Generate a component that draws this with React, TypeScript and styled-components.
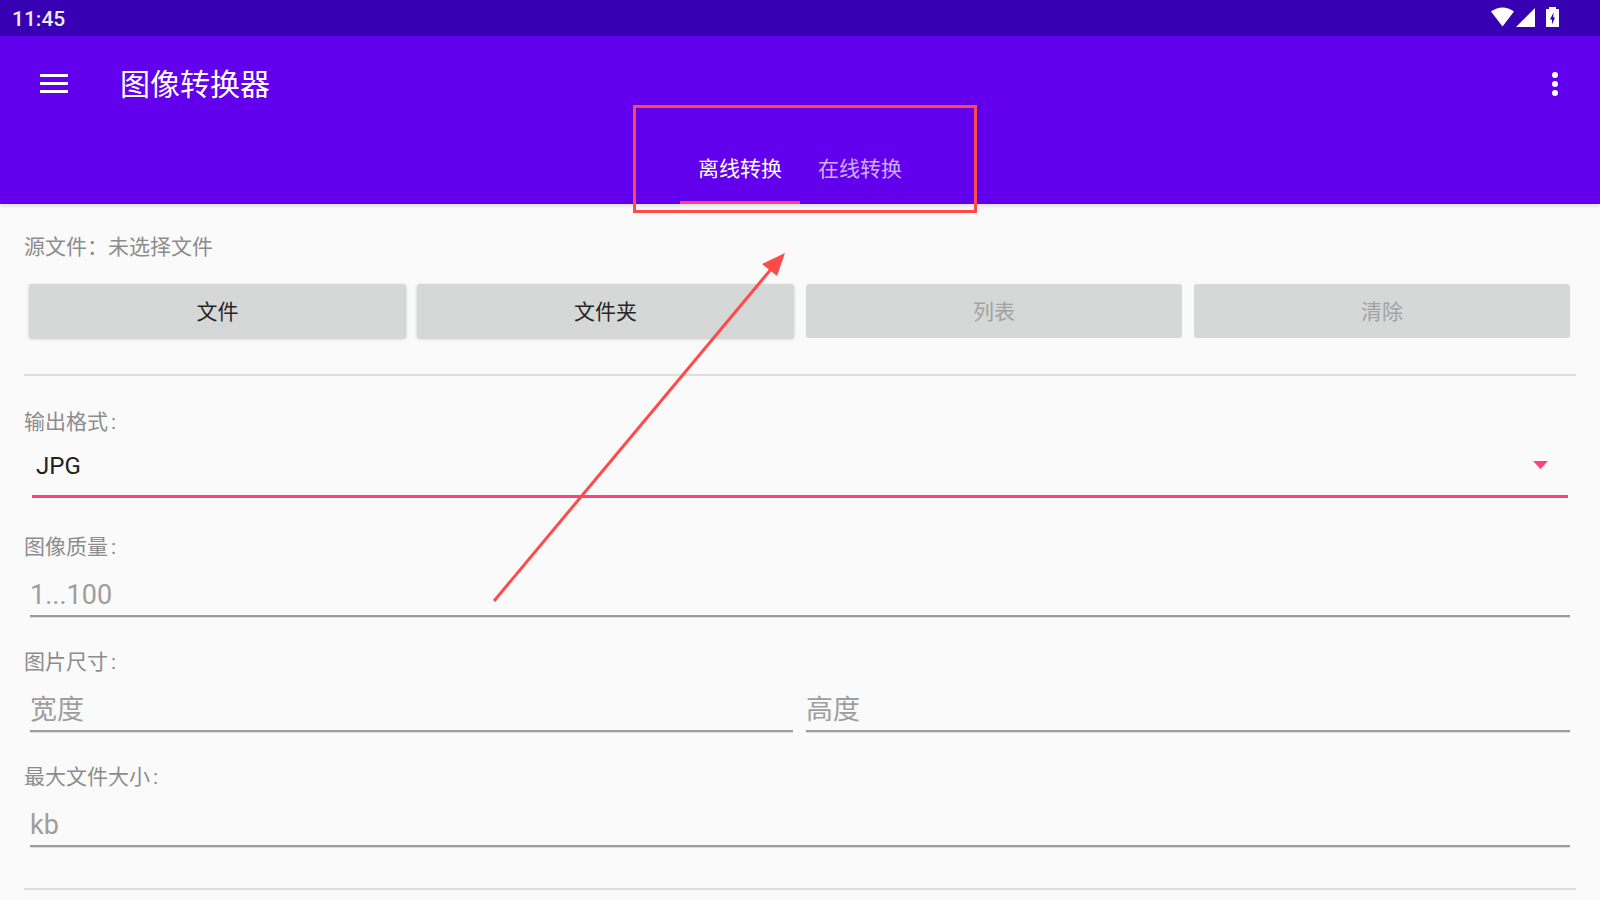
import React from "react";
import styled, { createGlobalStyle } from "styled-components";

const Global = createGlobalStyle`
  html, body { margin: 0; padding: 0; width: 1600px; height: 900px; overflow: hidden; background: #fafafa; }
  * { box-sizing: border-box; }
  body { font-family: Roboto, "Noto Sans CJK SC", sans-serif; }
`;

const Screen = styled.div`
  position: relative;
  width: 1600px;
  height: 900px;
  overflow: hidden;
  background: #fafafa;
`;

const StatusBar = styled.div`
  height: 36px;
  background: #3700b3;
  display: flex;
  align-items: center;
  padding: 0 13px 0 12px;
  justify-content: space-between;
`;

const Time = styled.span`
  color: #f1eafb;
  font-size: 21px;
  font-weight: 500;
  line-height: 36px;
  padding-top: 1px;
`;

const StatusIcons = styled.div`
  display: flex;
  align-items: center;
  margin-right: 28px;
  margin-top: -2px;
`;

const AppBar = styled.header`
  height: 168px;
  background: #6200ee;
  display: flex;
  flex-direction: column;
  box-shadow: 0 2px 4px rgba(0, 0, 0, 0.12);
  position: relative;
`;

const ToolRow = styled.div`
  height: 96px;
  display: flex;
  align-items: center;
  padding-left: 40px;
  padding-right: 42px;
`;

const Title = styled.h1`
  margin: 0 0 0 52px;
  color: #fff;
  font-size: 30px;
  font-weight: 400;
  line-height: 96px;
  padding-top: 1px;
  flex: 1;
`;

const Tabs = styled.div`
  height: 72px;
  display: flex;
  justify-content: center;
`;

const Tab = styled.div<{ $active?: boolean }>`
  width: 120px;
  height: 72px;
  display: flex;
  align-items: center;
  justify-content: center;
  font-size: 21px;
  color: ${(p) => (p.$active ? "#fff" : "rgba(255,255,255,0.7)")};
  border-bottom: 3px solid ${(p) => (p.$active ? "#ff4081" : "transparent")};
`;

const Content = styled.main`
  padding: 0 24px;
  display: flex;
  flex-direction: column;
`;

const Label = styled.div<{ $top: number }>`
  margin-top: ${(p) => p.$top}px;
  height: 30px;
  line-height: 30px;
  font-size: 21px;
  color: #8c8c8c;
`;

const Colon = styled.span`
  margin-left: 3px;
`;

const ButtonRow = styled.div`
  margin-top: 22px;
  padding: 0 6px 0 5px;
  display: grid;
  grid-template-columns: 377px 388px 388px 388px;
`;

const ActionButton = styled.button<{ $disabled?: boolean; $gap?: number }>`
  height: 54px;
  border: 0;
  border-radius: 3px;
  background: #d6d7d7;
  font-family: inherit;
  font-size: 21px;
  color: ${(p) => (p.$disabled ? "#a3a3a3" : "#262626")};
  box-shadow: ${(p) => (p.$disabled ? "none" : "0 1px 3px rgba(0,0,0,0.22)")};
  padding: 0 0 2px;
  margin-left: ${(p) => p.$gap ?? 0}px;
`;

const Divider = styled.hr<{ $top: number }>`
  margin: ${(p) => p.$top}px 0 0;
  height: 2px;
  border: 0;
  background: #dedede;
`;

const SelectBox = styled.div`
  margin: 0 8px;
  height: 61px;
  border-bottom: 3px solid #ff4081;
  display: flex;
  align-items: center;
  justify-content: space-between;
  padding: 0 20px 0 4px;
`;

const SelectValue = styled.span`
  font-size: 24px;
  color: #212121;
`;

const FieldRow = styled.div<{ $split?: boolean }>`
  margin: 0 6px;
  display: grid;
  grid-template-columns: ${(p) => (p.$split ? "763px 764px" : "1fr")};
  column-gap: 13px;
`;

const InputBox = styled.div<{ $cjk?: boolean }>`
  height: 55px;
  border-bottom: 2px solid #9c9c9c;
  box-shadow: 0 1px 0 #dddddd;
  display: flex;
  align-items: center;
  font-size: 27px;
  color: #9e9e9e;
  padding-top: ${(p) => (p.$cjk ? 8 : 12)}px;
`;

const Overlay = styled.svg`
  position: absolute;
  left: 0;
  top: 0;
  pointer-events: none;
`;

export default function App() {
  return (
    <Screen>
      <Global />
      <StatusBar>
        <Time>11:45</Time>
        <StatusIcons>
          <svg width="68" height="20" viewBox="0 0 68 20">
            <path d="M0 4.5 Q11.5 -3.5 23 4.5 L11.5 19.5 Z" fill="#fff" />
            <path d="M25 20 L44 1 V20 Z" fill="#fff" />
            <path d="M55 2 h3 v-2 h7 v2 h3 v18 h-13 Z" fill="#fff" />
            <path d="M62.5 5.5 L59 12.5 H61 V17.5 L64 10.5 H62.3 Z" fill="#3700b3" />
          </svg>
        </StatusIcons>
      </StatusBar>
      <AppBar>
        <ToolRow>
          <svg width="28" height="20" viewBox="0 0 28 20">
            <path d="M0 0h28v3H0zM0 8h28v3H0zM0 16h28v3H0z" fill="#fff" />
          </svg>
          <Title>图像转换器</Title>
          <svg width="6" height="24" viewBox="0 0 6 24">
            <circle cx="3" cy="3" r="3" fill="#fff" />
            <circle cx="3" cy="12" r="3" fill="#fff" />
            <circle cx="3" cy="21" r="3" fill="#fff" />
          </svg>
        </ToolRow>
        <Tabs>
          <Tab $active>离线转换</Tab>
          <Tab>在线转换</Tab>
        </Tabs>
      </AppBar>
      <Content>
        <Label $top={28}>源文件：未选择文件</Label>
        <ButtonRow>
          <ActionButton>文件</ActionButton>
          <ActionButton $gap={11}>文件夹</ActionButton>
          <ActionButton $gap={12} $disabled>列表</ActionButton>
          <ActionButton $gap={12} $disabled>清除</ActionButton>
        </ButtonRow>
        <Divider $top={36} />
        <Label $top={31}>输出格式<Colon>:</Colon></Label>
        <SelectBox>
          <SelectValue>JPG</SelectValue>
          <svg width="15" height="8" viewBox="0 0 15 8" style={{ marginTop: -2 }}>
            <path d="M0 0h15L7.5 8z" fill="#ff4081" />
          </svg>
        </SelectBox>
        <Label $top={34}>图像质量<Colon>:</Colon></Label>
        <FieldRow>
          <InputBox>1...100</InputBox>
        </FieldRow>
        <Label $top={30}>图片尺寸<Colon>:</Colon></Label>
        <FieldRow $split>
          <InputBox $cjk>宽度</InputBox>
          <InputBox $cjk>高度</InputBox>
        </FieldRow>
        <Label $top={30}>最大文件大小<Colon>:</Colon></Label>
        <FieldRow>
          <InputBox>kb</InputBox>
        </FieldRow>
        <Divider $top={41} />
      </Content>
      <Overlay width="1600" height="900" viewBox="0 0 1600 900">
        <rect x="634.5" y="106.5" width="341" height="105" fill="none" stroke="#ff4a4a" strokeWidth="3" />
        <line x1="494" y1="601" x2="772" y2="268" stroke="#ff4a4a" strokeWidth="3" />
        <path d="M785 253 L762 264 L777 276 Z" fill="#ff4a4a" />
      </Overlay>
    </Screen>
  );
}
